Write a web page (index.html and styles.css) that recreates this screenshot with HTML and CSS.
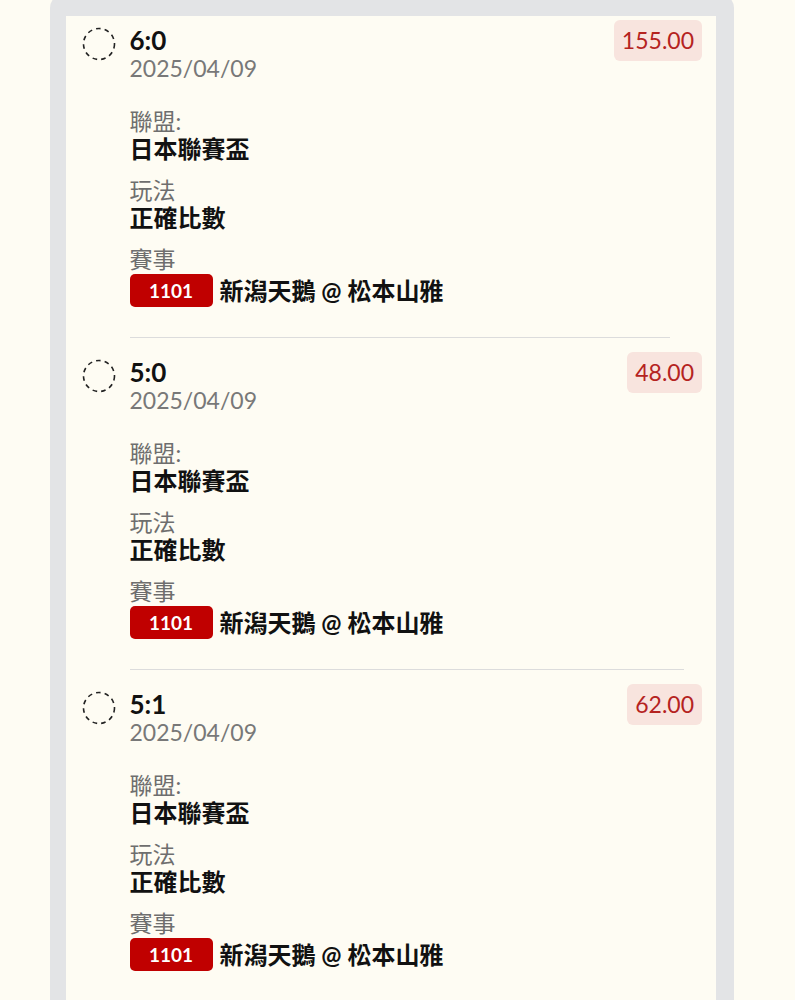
FILE: index.html
```html
<!DOCTYPE html>
<html lang="zh-Hant">
<head>
<meta charset="utf-8">
<title>投注紀錄</title>
<link rel="stylesheet" href="styles.css">
</head>
<body>
<div class="frame">
  <div class="card">
    <div class="item item-first">
      <div class="row">
        <svg class="check" width="34" height="34" viewBox="0 0 34 34"><circle cx="17" cy="17" r="15.5" fill="none" stroke="#222" stroke-width="1.6" stroke-dasharray="4.6 4.1"/></svg>
        <div class="body">
          <div class="score">6:0</div>
          <div class="date">2025/04/09</div>
          <div class="fields">
            <div class="field"><div class="label">聯盟:</div><div class="value">日本聯賽盃</div></div>
            <div class="field"><div class="label">玩法</div><div class="value">正確比數</div></div>
            <div class="field"><div class="label">賽事</div><div class="match"><span class="code">1101</span><span class="teams">新潟天鵝 @ 松本山雅</span></div></div>
          </div>
        </div>
        <div class="odds">155.00</div>
      </div>
      <div class="divider divider-short"></div>
    </div>
    <div class="item">
      <div class="row">
        <svg class="check" width="34" height="34" viewBox="0 0 34 34"><circle cx="17" cy="17" r="15.5" fill="none" stroke="#222" stroke-width="1.6" stroke-dasharray="4.6 4.1"/></svg>
        <div class="body">
          <div class="score">5:0</div>
          <div class="date">2025/04/09</div>
          <div class="fields">
            <div class="field"><div class="label">聯盟:</div><div class="value">日本聯賽盃</div></div>
            <div class="field"><div class="label">玩法</div><div class="value">正確比數</div></div>
            <div class="field"><div class="label">賽事</div><div class="match"><span class="code">1101</span><span class="teams">新潟天鵝 @ 松本山雅</span></div></div>
          </div>
        </div>
        <div class="odds">48.00</div>
      </div>
      <div class="divider"></div>
    </div>
    <div class="item">
      <div class="row">
        <svg class="check" width="34" height="34" viewBox="0 0 34 34"><circle cx="17" cy="17" r="15.5" fill="none" stroke="#222" stroke-width="1.6" stroke-dasharray="4.6 4.1"/></svg>
        <div class="body">
          <div class="score">5:1</div>
          <div class="date">2025/04/09</div>
          <div class="fields">
            <div class="field"><div class="label">聯盟:</div><div class="value">日本聯賽盃</div></div>
            <div class="field"><div class="label">玩法</div><div class="value">正確比數</div></div>
            <div class="field"><div class="label">賽事</div><div class="match"><span class="code">1101</span><span class="teams">新潟天鵝 @ 松本山雅</span></div></div>
          </div>
        </div>
        <div class="odds">62.00</div>
      </div>
      <div class="divider"></div>
    </div>
  </div>
</div>
</body>
</html>
```
FILE: styles.css
```css
html, body {
  margin: 0;
  padding: 0;
  background: #fefcf3;
  font-family: "Lato", "Noto Sans CJK TC", sans-serif;
  color: #111;
}

.frame {
  margin: -6px 0 0 50px;
  width: 684px;
  box-sizing: border-box;
  padding: 22px 18px 0 16px;
  background: #e3e4e6;
  border-radius: 14px;
  overflow: hidden;
}

.card {
  background: #fefcf3;
  padding-bottom: 40px;
}

.item {
  padding: 14px 14px 0 16px;
}

.item-first {
  padding-top: 4px;
}

.row {
  display: flex;
  align-items: flex-start;
}

.check {
  flex: none;
  margin-top: 7px;
  margin-left: -0.5px;
}

.body {
  flex: 1;
  margin-left: 14px;
}

.score {
  margin-top: 6px;
  font-size: 26px;
  font-weight: 700;
  line-height: 28px;
}

.date {
  font-size: 23px;
  line-height: 28px;
  color: #787878;
}

.fields {
  margin-top: 25px;
  display: flex;
  flex-direction: column;
  gap: 13px;
}

.label {
  font-size: 23px;
  line-height: 28px;
  color: #6e6e6e;
}

.value {
  font-size: 24px;
  line-height: 28px;
  font-weight: 700;
}

.match {
  display: flex;
  align-items: center;
  gap: 7px;
  margin-top: 1px;
}

.code {
  display: inline-flex;
  align-items: center;
  justify-content: center;
  width: 83px;
  height: 33px;
  border-radius: 5px;
  background: #c00000;
  color: #fff;
  font-size: 19px;
  font-weight: 700;
}

.teams {
  font-size: 24px;
  font-weight: 700;
  line-height: 33px;
}

.odds {
  flex: none;
  height: 41px;
  padding: 0 8px;
  border-radius: 6px;
  background: #f8e4de;
  color: #b5231f;
  font-size: 23px;
  line-height: 41px;
}

.divider {
  margin: 30px 18px 0 48px;
  height: 1px;
  background: #dcdcdc;
}

.divider-short {
  margin-right: 32px;
}
```
